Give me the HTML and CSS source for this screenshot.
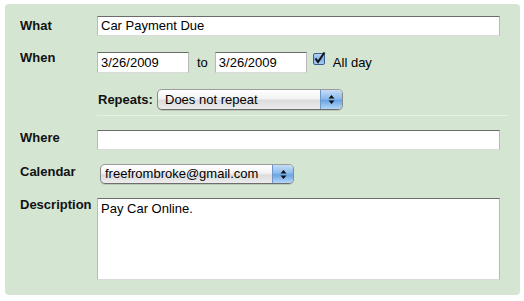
FILE: index.html
```html
<!DOCTYPE html>
<html>
<head>
<meta charset="utf-8">
<link rel="stylesheet" href="styles.css">
</head>
<body>
<div class="panel">
  <div class="row row-what">
    <div class="lbl lbl-what">What</div>
    <div class="field"><div class="input wide">Car Payment Due</div></div>
  </div>
  <div class="row row-when">
    <div class="lbl lbl-when">When</div>
    <div class="field when">
      <div class="input date">3/26/2009</div>
      <span class="to">to</span>
      <div class="input date">3/26/2009</div>
      <svg class="check" width="13" height="14" viewBox="0 0 13 14">
        <defs>
          <linearGradient id="cb" x1="0" y1="0" x2="0" y2="1">
            <stop offset="0" stop-color="#bcd6f3"/>
            <stop offset="0.5" stop-color="#7fb0e6"/>
            <stop offset="1" stop-color="#a9cdf3"/>
          </linearGradient>
        </defs>
        <rect x="0.5" y="1.5" width="11" height="11" rx="1.5" fill="url(#cb)" stroke="#3d5f8c"/>
        <path d="M2.5 6.5 L5 10 L11.5 0.5" fill="none" stroke="#111" stroke-width="2"/>
      </svg>
      <span class="allday">All day</span>
    </div>
  </div>
  <div class="row row-repeat">
    <div class="lbl"></div>
    <div class="field repeat">
      <span class="rlbl">Repeats:</span>
      <div class="select rsel"><span class="stext">Does not repeat</span><span class="arrows"><svg width="7" height="11" viewBox="0 0 7 11"><path d="M3.5 1 L6.5 4.5 L0.5 4.5Z M3.5 10 L6.5 6.5 L0.5 6.5Z" fill="#111"/></svg></span></div>
    </div>
  </div>
  <div class="divider"></div>
  <div class="row row-where">
    <div class="lbl">Where</div>
    <div class="field"><div class="input wide"></div></div>
  </div>
  <div class="row row-cal">
    <div class="lbl">Calendar</div>
    <div class="field"><div class="select csel"><span class="stext">freefrombroke@gmail.com</span><span class="arrows"><svg width="7" height="11" viewBox="0 0 7 11"><path d="M3.5 1 L6.5 4.5 L0.5 4.5Z M3.5 10 L6.5 6.5 L0.5 6.5Z" fill="#111"/></svg></span></div></div>
  </div>
  <div class="row row-desc">
    <div class="lbl lbl-desc">Description</div>
    <div class="field"><div class="input area">Pay Car Online.</div></div>
  </div>
</div>
</body>
</html>
```
FILE: styles.css
```css
html, body {
  margin: 0;
  padding: 0;
  background: #ffffff;
}
body {
  font-family: "Liberation Sans", Arial, sans-serif;
  font-size: 13px;
  color: #000;
}
.panel {
  margin: 4px 0 0 5px;
  width: 515px;
  height: 291px;
  box-sizing: border-box;
  background: #d4e5d1;
  border-radius: 4px;
  padding: 12px 0 0 15px;
}
.row {
  display: flex;
  align-items: flex-start;
}
.lbl {
  width: 77px;
  flex: none;
  font-weight: bold;
  line-height: 15px;
  color: #111;
}
.lbl-what { margin-top: 2px; }
.lbl-when { margin-top: -2px; }
.lbl-desc { margin-top: -1px; }
.field {
  flex: none;
}
.input {
  box-sizing: border-box;
  background: #fff;
  border: 1px solid #b9b9b9;
  border-top-color: #6b6b6b;
  border-bottom-color: #dadada;
  line-height: 18px;
  padding: 0 3px;
  height: 20px;
  white-space: nowrap;
}
.wide { width: 403px; }
.row-when { margin-top: 16px; }
.when {
  display: flex;
  align-items: flex-start;
}
.date {
  width: 92px;
  height: 21px;
  line-height: 20px;
}
.to {
  margin: 0 7px 0 8px;
  line-height: 21px;
  height: 21px;
}
.check {
  margin: 0 0 0 6px;
  display: block;
}
.allday {
  margin-left: 7px;
  line-height: 21px;
  height: 21px;
}
.row-repeat { margin-top: 16px; }
.repeat {
  display: flex;
  align-items: center;
  padding-left: 1px;
  height: 21px;
}
.rlbl {
  font-weight: bold;
  width: 59px;
  color: #111;
}
.select {
  box-sizing: border-box;
  height: 21px;
  display: flex;
  align-items: stretch;
  border: 1px solid #8a8a8a;
  border-top-color: #9c9c9c;
  border-bottom-color: #6d6d6d;
  border-radius: 5px;
  background: linear-gradient(#ffffff 0%, #f3f3f3 45%, #dcdcdc 55%, #ececec 100%);
  overflow: hidden;
  box-shadow: 0 1px 0 rgba(0,0,0,0.12);
}
.stext {
  flex: 1;
  line-height: 19px;
  padding-left: 7px;
  white-space: nowrap;
}
.arrows {
  width: 21px;
  flex: none;
  display: flex;
  align-items: center;
  justify-content: center;
  border-left: 1px solid #6d96c9;
  background: linear-gradient(#c7ddf6 0%, #8cbbec 45%, #6aa4e4 55%, #b6d7f7 100%);
}
.arrows svg { display: block; }
.rsel { width: 186px; }
.divider {
  height: 1px;
  background: #e6f0e4;
  margin: 5px 0 0 77px;
  width: 410px;
}
.row-where { margin-top: 14px; }
.row-cal { margin-top: 14px; }
.csel {
  width: 194px;
  margin-left: 3px;
  height: 20px;
}
.csel .stext { line-height: 18px; padding-left: 4px; }
.csel .arrows { width: 20px; }
.row-desc { margin-top: 14px; }
.area {
  width: 403px;
  height: 82px;
  line-height: 16px;
  padding-top: 2px;
  white-space: normal;
}
```
